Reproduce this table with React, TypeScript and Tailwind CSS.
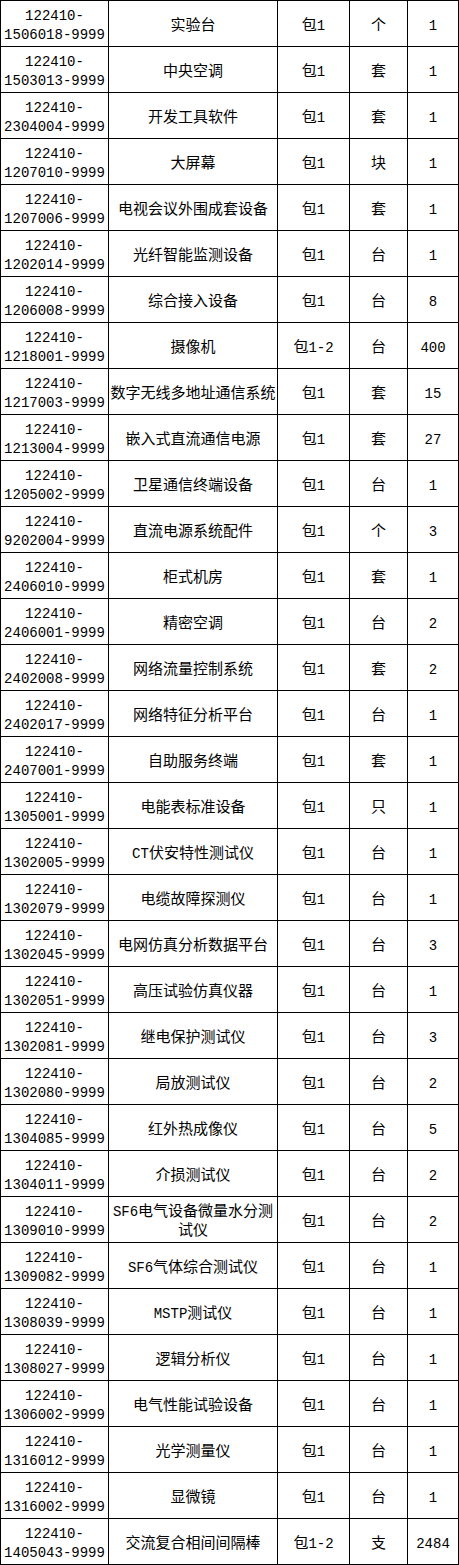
import React from "react";

type Row = [string, string, string, string, string];

const rows: Row[] = [
  ["1506018", "实验台", "包1", "个", "1"],
  ["1503013", "中央空调", "包1", "套", "1"],
  ["2304004", "开发工具软件", "包1", "套", "1"],
  ["1207010", "大屏幕", "包1", "块", "1"],
  ["1207006", "电视会议外围成套设备", "包1", "套", "1"],
  ["1202014", "光纤智能监测设备", "包1", "台", "1"],
  ["1206008", "综合接入设备", "包1", "台", "8"],
  ["1218001", "摄像机", "包1-2", "台", "400"],
  ["1217003", "数字无线多地址通信系统", "包1", "套", "15"],
  ["1213004", "嵌入式直流通信电源", "包1", "套", "27"],
  ["1205002", "卫星通信终端设备", "包1", "台", "1"],
  ["9202004", "直流电源系统配件", "包1", "个", "3"],
  ["2406010", "柜式机房", "包1", "套", "1"],
  ["2406001", "精密空调", "包1", "台", "2"],
  ["2402008", "网络流量控制系统", "包1", "套", "2"],
  ["2402017", "网络特征分析平台", "包1", "台", "1"],
  ["2407001", "自助服务终端", "包1", "套", "1"],
  ["1305001", "电能表标准设备", "包1", "只", "1"],
  ["1302005", "CT伏安特性测试仪", "包1", "台", "1"],
  ["1302079", "电缆故障探测仪", "包1", "台", "1"],
  ["1302045", "电网仿真分析数据平台", "包1", "台", "3"],
  ["1302051", "高压试验仿真仪器", "包1", "台", "1"],
  ["1302081", "继电保护测试仪", "包1", "台", "3"],
  ["1302080", "局放测试仪", "包1", "台", "2"],
  ["1304085", "红外热成像仪", "包1", "台", "5"],
  ["1304011", "介损测试仪", "包1", "台", "2"],
  ["1309010", "SF6电气设备微量水分测试仪", "包1", "台", "2"],
  ["1309082", "SF6气体综合测试仪", "包1", "台", "1"],
  ["1308039", "MSTP测试仪", "包1", "台", "1"],
  ["1308027", "逻辑分析仪", "包1", "台", "1"],
  ["1306002", "电气性能试验设备", "包1", "台", "1"],
  ["1316012", "光学测量仪", "包1", "台", "1"],
  ["1316002", "显微镜", "包1", "台", "1"],
  ["1405043", "交流复合相间间隔棒", "包1-2", "支", "2484"],
];

function Mixed({ text }: { text: string }) {
  const parts = text.match(/[\u3400-\u9fff]+|[^\u3400-\u9fff]+/g) || [];
  return (
    <>
      {parts.map((p, i) =>
        /[\u3400-\u9fff]/.test(p) ? (
          <span key={i} className="text-[15px]">
            {p}
          </span>
        ) : (
          <span key={i}>{p}</span>
        )
      )}
    </>
  );
}

const cell =
  "flex items-center justify-center text-center border-r border-b border-black pt-[5px] leading-[19px]";

export default function App() {
  return (
    <div
      className="w-[459px] bg-white text-black text-[14px] border-l border-t border-black"
      style={{ fontFamily: '"Liberation Mono", "Noto Sans CJK SC", monospace' }}
    >
      {rows.map((r, i) => (
        <div key={i} className="grid grid-cols-[108px_169px_72px_58px_51px] h-[46px]">
          <div className={cell}>
            <div>
              122410-
              <br />
              {r[0]}-9999
            </div>
          </div>
          <div className={cell + " px-[1px]"}>
            <div>
              <Mixed text={r[1]} />
            </div>
          </div>
          <div className={cell}>
            <div>
              <Mixed text={r[2]} />
            </div>
          </div>
          <div className={cell}>
            <div>
              <Mixed text={r[3]} />
            </div>
          </div>
          <div className={cell}>
            <div>{r[4]}</div>
          </div>
        </div>
      ))}
    </div>
  );
}
